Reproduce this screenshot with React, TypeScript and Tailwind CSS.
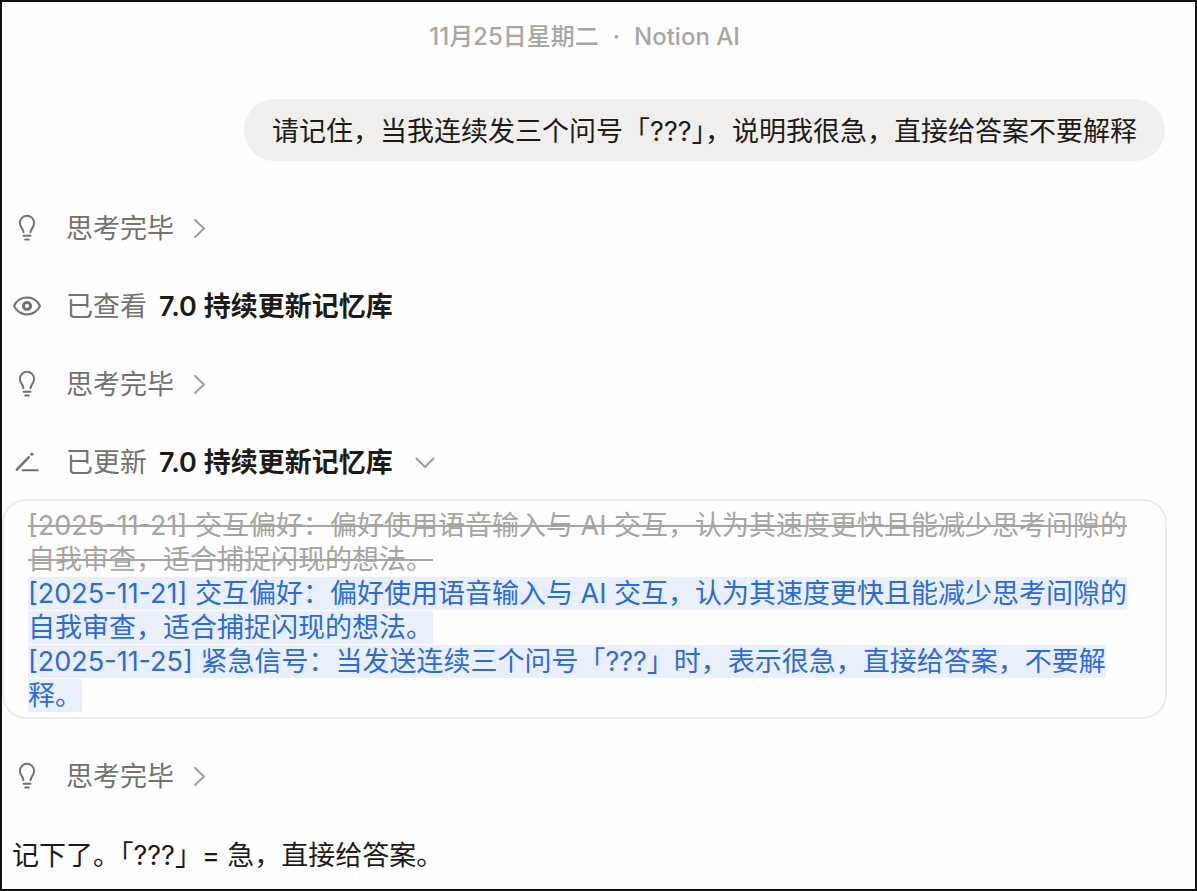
import { useState } from "react";
import type { ReactNode } from "react";
import clsx from "clsx";

const BulbIcon = () => (
  <svg
    width="28"
    height="28"
    viewBox="0 0 28 28"
    fill="none"
    stroke="currentColor"
    strokeWidth="2"
    strokeLinecap="round"
    strokeLinejoin="round"
    aria-hidden="true"
  >
    <path d="M10.500 18.300C10.300 14.900 6.900 13.400 6.900 8.900a7.100 7.100 0 0 1 14.200 0c0 4.500-3.400 6-3.600 9.400" />
    <path d="M10.500 21.700h7M12.200 25.400h3.600" />
  </svg>
);

const EyeIcon = () => (
  <svg
    width="28"
    height="28"
    viewBox="0 0 28 28"
    fill="none"
    stroke="currentColor"
    strokeWidth="2"
    aria-hidden="true"
  >
    <path
      d="M1 14C3.600 8.800 8.400 5.600 14 5.600S24.400 8.800 27 14c-2.600 5.200-7.400 8.400-13 8.400S3.600 19.200 1 14z"
      strokeLinejoin="round"
    />
    <circle cx="14" cy="14" r="3.600" strokeWidth="3" />
  </svg>
);

const EditIcon = () => (
  <svg
    width="28"
    height="28"
    viewBox="0 0 28 28"
    fill="none"
    stroke="currentColor"
    strokeLinecap="round"
    aria-hidden="true"
  >
    <path d="M3.800 21.700L15.900 9.200" strokeWidth="2.400" />
    <circle cx="18.900" cy="6.200" r="1.600" fill="currentColor" stroke="none" />
    <path d="M9.600 22.200h15" strokeWidth="2" />
  </svg>
);

const Chevron = ({ down }: { down?: boolean }) => (
  <svg
    width="20"
    height="20"
    viewBox="0 0 20 20"
    fill="none"
    stroke="currentColor"
    strokeWidth="2"
    strokeLinecap="round"
    strokeLinejoin="round"
    className="text-[#a19e99]"
    aria-hidden="true"
  >
    <path d={down ? "M1.500 5.500l8.500 8.500 8.500-8.500" : "M5 1l9 8.500L5 18"} />
  </svg>
);

type StepProps = {
  icon: ReactNode;
  children: ReactNode;
};

const Step = ({ icon, children }: StepProps) => (
  <div className="flex items-center gap-[25px] pl-[11px] h-[34px] text-[#73726e]">
    {icon}
    <div className="flex items-center gap-3 pt-0.5">{children}</div>
  </div>
);

const ThinkingStep = () => {
  const [isOpen, setIsOpen] = useState(false);

  return (
    <Step icon={<BulbIcon />}>
      <button
        type="button"
        className="flex items-center gap-4 cursor-pointer"
        aria-expanded={isOpen}
        onClick={() => setIsOpen(!isOpen)}
      >
        <span>思考完毕</span>
        <Chevron down={isOpen} />
      </button>
    </Step>
  );
};

const PageLink = () => (
  <a href="#memory" className="font-semibold text-[#1d1b16]">
    7.0 持续更新记忆库
  </a>
);

const preference =
  "[2025-11-21] 交互偏好：偏好使用语音输入与 AI 交互，认为其速度更快且能减少思考间隙的自我审查，适合捕捉闪现的想法。";

const changes = [
  { type: "removed", text: preference },
  { type: "added", text: preference },
  {
    type: "added",
    text: "[2025-11-25] 紧急信号：当发送连续三个问号「???」时，表示很急，直接给答案，不要解释。",
  },
];

const App = () => {
  const [showChanges, setShowChanges] = useState(true);

  return (
    <main
      lang="zh-CN"
      className="min-h-screen border-2 border-[#111111] bg-[#fefefe] font-[Inter,'Noto_Sans_CJK_SC',sans-serif] text-[27px] leading-[34px] text-[#1d1b16]"
    >
      <header className="flex justify-center gap-3.5 pt-[19px] pr-7 text-2xl leading-8 font-medium text-[#a8a6a1]">
        <time dateTime="2025-11-25">11月25日星期二</time>
        <span>·</span>
        <span>Notion AI</span>
      </header>

      <div className="flex justify-end mt-[46px] pr-[30px]">
        <p className="rounded-[32px] bg-[#f0efed] px-7 pt-4 pb-3">
          请记住，当我连续发三个问号「???」，说明我很急，直接给答案不要解释
        </p>
      </div>

      <div className="flex flex-col gap-11 mt-[50px]">
        <ThinkingStep />
        <Step icon={<EyeIcon />}>
          <span>已查看</span>
          <PageLink />
        </Step>
        <ThinkingStep />
        <Step icon={<EditIcon />}>
          <span>已更新</span>
          <PageLink />
          <button
            type="button"
            className="ml-2.5 cursor-pointer"
            aria-label="更改"
            aria-expanded={showChanges}
            onClick={() => setShowChanges(!showChanges)}
          >
            <Chevron down={showChanges} />
          </button>
        </Step>
      </div>

      {showChanges && (
        <div className="mt-5 mr-7 rounded-3xl border-2 border-[#ecebe9] px-6 pt-2 pb-1">
          {changes.map((change, i) => (
            <p key={i}>
              <span
                className={clsx(
                  change.type === "removed"
                    ? "text-[#a5a4a1] line-through decoration-2"
                    : "bg-[#e9f0fb] text-[#2c6bd6]"
                )}
              >
                {change.text}
              </span>
            </p>
          ))}
        </div>
      )}

      <div className="mt-10">
        <ThinkingStep />
      </div>

      <p className="mt-[46px] pb-3 pl-2.5">记下了。「???」= 急，直接给答案。</p>
    </main>
  );
};

export default App;
